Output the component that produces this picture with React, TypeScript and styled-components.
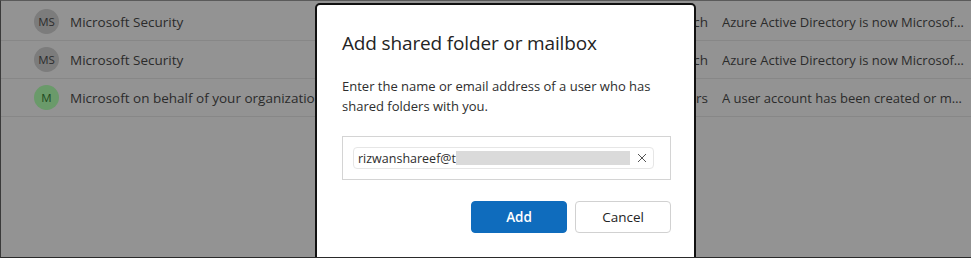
import React from 'react';
import styled, { createGlobalStyle } from 'styled-components';

const GlobalStyle = createGlobalStyle`
  html, body {
    margin: 0;
    padding: 0;
    background: #939393;
  }
  body {
    font-family: "Open Sans", "Noto Sans", sans-serif;
  }
`;

const Page = styled.div`
  position: relative;
  width: 971px;
  height: 258px;
  box-sizing: border-box;
  border-left: 1px solid #3a3a3a;
  border-top: 1px solid #5a5a5a;
  border-bottom: 1px solid #2a2a2a;
  background: #939393;
  overflow: hidden;
`;

const List = styled.div`
  display: flex;
  flex-direction: column;
  padding-top: 2px;
`;

const Row = styled.div`
  display: flex;
  align-items: center;
  height: 37px;
  border-bottom: 1px solid #878787;
  padding-left: 33px;
  font-size: 13.5px;
  color: #2b2b2b;
  white-space: nowrap;
`;

const Avatar = styled.div<{ $green?: boolean }>`
  flex: none;
  width: 25px;
  height: 25px;
  border-radius: 50%;
  display: flex;
  align-items: center;
  justify-content: center;
  font-size: 11.5px;
  background: ${(p) => (p.$green ? '#6a9a6a' : '#7c7c7c')};
  color: ${(p) => (p.$green ? '#1e4a1e' : '#2c2c2c')};
  margin-right: 11px;
`;

const Sender = styled.div`
  flex: none;
  width: 245px;
  overflow: hidden;
`;

const Folder = styled.div`
  flex: none;
  width: 393px;
  text-align: right;
  overflow: hidden;
`;

const Preview = styled.div`
  flex: 1;
  min-width: 0;
  margin-left: 14px;
  overflow: hidden;
  text-overflow: ellipsis;
  padding-right: 6px;
  font-size: 13px;
`;

const Dialog = styled.div`
  position: absolute;
  left: 314px;
  top: 2px;
  width: 381px;
  height: 280px;
  box-sizing: border-box;
  background: #fff;
  border: 2px solid #111;
  border-radius: 5px;
  padding: 24px 23px 0 25px;
  display: flex;
  flex-direction: column;
  color: #242424;
`;

const Title = styled.h2`
  margin: 0;
  font-size: 19px;
  font-weight: 500;
  line-height: 28px;
  letter-spacing: -0.15px;
`;

const Description = styled.p`
  margin: 19px 0 0;
  font-size: 13px;
  line-height: 20px;
  color: #2e2e2e;
`;

const PickerBox = styled.div`
  margin-top: 20px;
  height: 44px;
  box-sizing: border-box;
  border: 1px solid #d4d4d4;
  padding: 10px;
  display: flex;
  align-items: center;
`;

const Chip = styled.div`
  width: 301px;
  height: 22px;
  box-sizing: border-box;
  border: 1px solid #e6e6e6;
  border-radius: 4px;
  display: flex;
  align-items: center;
  padding: 0 5px 0 4px;
  font-size: 12.5px;
  color: #2e2e2e;
`;

const Redacted = styled.span`
  flex: 1;
  height: 14px;
  margin: 0 6px 0 0;
  background: #dadada;
`;

const Remove = styled.button`
  border: none;
  background: transparent;
  padding: 0;
  width: 12px;
  height: 12px;
  display: flex;
  align-items: center;
  justify-content: center;
  color: #555;
`;

const Actions = styled.div`
  margin-top: 21px;
  display: flex;
  justify-content: flex-end;
  gap: 8px;
`;

const Button = styled.button<{ $primary?: boolean }>`
  width: 96px;
  height: 32px;
  border-radius: 4px;
  font-family: "Open Sans", "Noto Sans", sans-serif;
  font-size: 13.5px;
  font-weight: ${(p) => (p.$primary ? 600 : 400)};
  background: ${(p) => (p.$primary ? '#0f6cbd' : '#fff')};
  color: ${(p) => (p.$primary ? '#fff' : '#242424')};
  border: 1px solid ${(p) => (p.$primary ? '#0f6cbd' : '#d1d1d1')};
  cursor: pointer;
`;

const rows = [
  { initials: 'MS', sender: 'Microsoft Security', folder: 'Research', preview: 'Azure Active Directory is now Microsoft Entra ID' },
  { initials: 'MS', sender: 'Microsoft Security', folder: 'Research', preview: 'Azure Active Directory is now Microsoft Entra ID' },
  { initials: 'M', sender: 'Microsoft on behalf of your organization', folder: 'Users', preview: 'A user account has been created or modified', green: true },
];

export default function App() {
  return (
    <>
      <GlobalStyle />
      <Page>
        <List>
          {rows.map((r, i) => (
            <Row key={i}>
              <Avatar $green={r.green}>{r.initials}</Avatar>
              <Sender>{r.sender}</Sender>
              <Folder>{r.folder}</Folder>
              <Preview>{r.preview}</Preview>
            </Row>
          ))}
        </List>

        <Dialog role="dialog">
          <Title>Add shared folder or mailbox</Title>
          <Description>
            Enter the name or email address of a user who has shared folders with you.
          </Description>
          <PickerBox>
            <Chip>
              <span>rizwanshareef@t</span>
              <Redacted />
              <Remove aria-label="Remove">
                <svg width="10" height="10" viewBox="0 0 10 10">
                  <path d="M1 1L9 9M9 1L1 9" stroke="currentColor" strokeWidth="1" />
                </svg>
              </Remove>
            </Chip>
          </PickerBox>
          <Actions>
            <Button $primary>Add</Button>
            <Button>Cancel</Button>
          </Actions>
        </Dialog>
      </Page>
    </>
  );
}
